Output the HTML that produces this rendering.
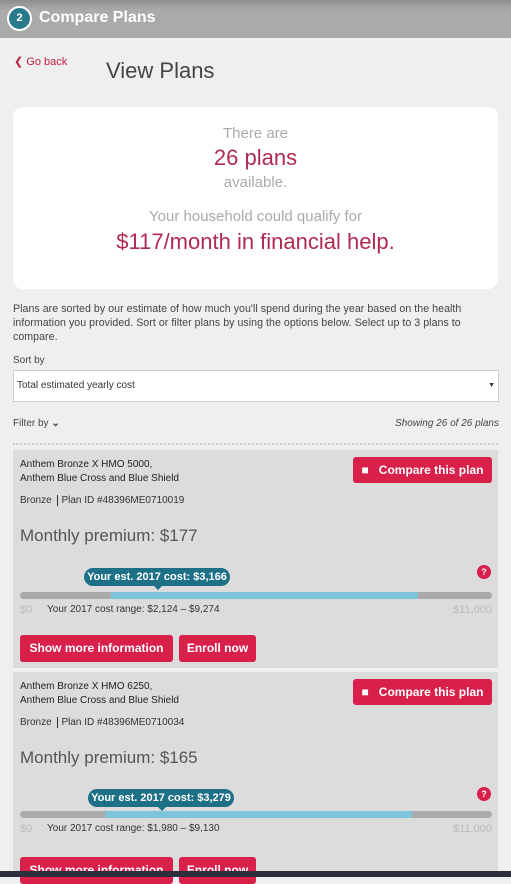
<!DOCTYPE html>
<html><head><style>
*{margin:0;padding:0;box-sizing:border-box}
body{width:511px;height:877px;overflow:hidden;background:#efefef;font-family:"Liberation Sans",sans-serif;position:relative;color:#333}
.a{position:absolute}
.hdr{left:0;top:0;width:511px;height:38px;background:linear-gradient(#8e8e8e,#aaa 10px,#aaa)}
.circ{left:7px;top:6px;width:25px;height:25px;border-radius:50%;background:#2a7a8c;border:2px solid #fff;color:#fff;font-size:11px;font-weight:bold;text-align:center;line-height:21px}
.card{left:13px;width:485px;background:#dcdcdc}
.btn{position:absolute;background:#d8204a;color:#fff;font-weight:bold;font-size:12px;border-radius:3px;text-align:center}
.bar{position:absolute;left:7px;width:472px;height:7px;border-radius:4px;background:#aaa}
.tip{position:absolute;background:#1d7086;color:#fff;font-weight:bold;font-size:11px;border-radius:9px;text-align:center;height:18px;line-height:18px}
.tip:after{content:"";position:absolute;left:70px;bottom:-4px;border:4px solid transparent;border-bottom:0;border-top-color:#1d7086}
.q{position:absolute;width:14px;height:14px;border-radius:50%;background:#d8204a;color:#fff;font-size:9px;font-weight:bold;text-align:center;line-height:14px}
.sm{font-size:11px;color:#bbb}
</style></head><body>
<div class="a hdr"></div>
<div class="a circ">2</div>
<div class="a" style="left:39px;top:9px;color:#fff;font-weight:bold;font-size:16px">Compare Plans</div>
<div class="a" style="left:14px;top:55px;color:#c0203f;font-size:11px">&#10094; Go back</div>
<div class="a" style="left:106px;top:58px;font-size:22px;color:#444;font-weight:300">View Plans</div>
<div class="a" style="left:13px;top:107px;width:485px;height:182px;background:#fff;border-radius:10px;text-align:center">
<div style="margin-top:18px;color:#aaa;font-size:15px">There are</div>
<div style="color:#b02a50;font-size:22px;margin-top:3px">26 plans</div>
<div style="color:#aaa;font-size:15px;margin-top:3px">available.</div>
<div style="color:#aaa;font-size:15px;margin-top:17px">Your household could qualify for</div>
<div style="color:#b02a50;font-size:22px;margin-top:4px">$117/month in financial help.</div>
</div>
<div class="a" style="left:13px;top:302px;width:490px;font-size:10.6px;line-height:14px;color:#444;letter-spacing:0.05px">Plans are sorted by our estimate of how much you'll spend during the year based on the health information you provided. Sort or filter plans by using the options below. Select up to 3 plans to compare.</div>
<div class="a" style="left:13px;top:355px;font-size:10px;color:#444">Sort by</div>
<div class="a" style="left:13px;top:370px;width:486px;height:32px;background:#fff;border:1px solid #ccc;font-size:10px;padding:9px 3px;color:#333">Total estimated yearly cost<span style="float:right;font-size:7px;margin-top:2px">&#9660;</span></div>
<div class="a" style="left:13px;top:418px;font-size:10px;color:#444">Filter by <b>&#8964;</b></div>
<div class="a" style="right:12px;top:418px;font-size:10px;color:#444;font-style:italic">Showing 26 of 26 plans</div>
<div class="a" style="left:13px;top:443px;width:485px;border-top:2px dotted #ccc"></div>

<div class="a card" style="top:450px;height:218px">
<div class="a" style="left:7px;top:8px;font-size:10px;line-height:14px;color:#222">Anthem Bronze X HMO 5000,<br>Anthem Blue Cross and Blue Shield</div>
<div class="btn" style="left:340px;top:7px;width:139px;height:26px;line-height:26px">&#9632;&nbsp;&nbsp; Compare this plan</div>
<div class="a" style="left:7px;top:45px;font-size:10px;color:#333">Bronze <span style="border-left:1px solid #333;margin:0 3px"></span> Plan ID #48396ME0710019</div>
<div class="a" style="left:7px;top:76px;font-size:17px;color:#555">Monthly premium: $177</div>
<div class="q" style="left:464px;top:115px">?</div>
<div class="bar" style="top:142px"><div style="position:absolute;left:91px;width:307px;height:7px;background:#7ec5dc"></div></div>
<div class="tip" style="left:71px;top:118px;width:146px">Your est. 2017 cost: $3,166</div>
<div class="a sm" style="left:7px;top:154px">$0</div>
<div class="a" style="left:34px;top:154px;font-size:10px;color:#333">Your 2017 cost range: $2,124 – $9,274</div>
<div class="a sm" style="right:6px;top:154px">$11,000</div>
<div class="btn" style="left:7px;top:185px;width:153px;height:27px;line-height:27px">Show more information</div>
<div class="btn" style="left:166px;top:185px;width:77px;height:27px;line-height:27px">Enroll now</div>
</div>

<div class="a card" style="top:672px;height:205px">
<div class="a" style="left:7px;top:8px;font-size:10px;line-height:14px;color:#222">Anthem Bronze X HMO 6250,<br>Anthem Blue Cross and Blue Shield</div>
<div class="btn" style="left:340px;top:7px;width:139px;height:26px;line-height:26px">&#9632;&nbsp;&nbsp; Compare this plan</div>
<div class="a" style="left:7px;top:45px;font-size:10px;color:#333">Bronze <span style="border-left:1px solid #333;margin:0 3px"></span> Plan ID #48396ME0710034</div>
<div class="a" style="left:7px;top:76px;font-size:17px;color:#555">Monthly premium: $165</div>
<div class="q" style="left:464px;top:115px">?</div>
<div class="bar" style="top:139px"><div style="position:absolute;left:85px;width:307px;height:7px;background:#7ec5dc"></div></div>
<div class="tip" style="left:75px;top:117px;width:146px">Your est. 2017 cost: $3,279</div>
<div class="a sm" style="left:7px;top:151px">$0</div>
<div class="a" style="left:34px;top:151px;font-size:10px;color:#333">Your 2017 cost range: $1,980 – $9,130</div>
<div class="a sm" style="right:6px;top:151px">$11,000</div>
<div class="btn" style="left:7px;top:185px;width:153px;height:27px;line-height:27px">Show more information</div>
<div class="btn" style="left:166px;top:185px;width:77px;height:27px;line-height:27px">Enroll now</div>
</div>
<div class="a" style="left:0;top:871px;width:511px;height:6px;background:#2a2f3a"></div>
</body></html>
